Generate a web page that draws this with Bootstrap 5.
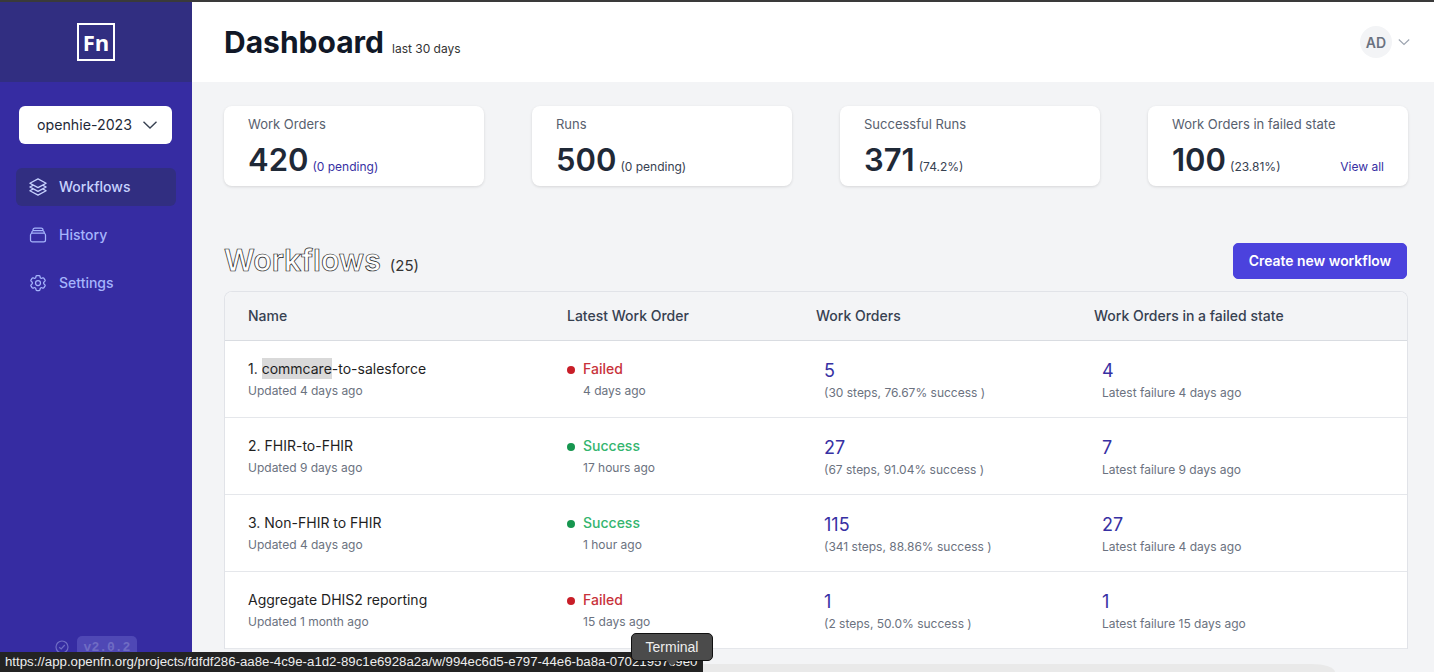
<!DOCTYPE html>
<html lang="en">
<head>
  <meta charset="UTF-8">
  <meta name="viewport" content="width=device-width, initial-scale=1">
  <title>Dashboard</title>
  <link href="https://cdn.jsdelivr.net/npm/bootstrap@5.3.0/dist/css/bootstrap.min.css" rel="stylesheet">
  <style>
    html, body {
      height: 672px;
      overflow: hidden;
    }
    body {
      background-color: #f3f4f6;
      font-family: Inter, "Liberation Sans", sans-serif;
      color: #1f2937;
      border-top: 2px solid #3a3a3a;
    }
    .app-shell { height: 670px; }
    .side-bar {
      width: 192px;
      flex: 0 0 192px;
      background-color: #362ca2;
    }
    .side-logo {
      height: 80px;
      background-color: #312e81;
    }
    .logo-box {
      width: 38px;
      height: 38px;
      border: 2px solid #fff;
      color: #fff;
      font-size: 22px;
      font-weight: 700;
      font-family: "Open Sans", sans-serif;
      line-height: 34px;
      text-align: center;
    }
    .project-pick {
      margin: 24px 20px 24px 19px;
      height: 38px;
      font-size: 14.2px;
      color: #1f2937;
      padding: 0 14px 0 18px;
      border-radius: 6px;
    }
    .side-link {
      height: 38px;
      margin: 0 16px 10px;
      padding: 0 12px 1px;
      gap: 11px;
      border-radius: 6px;
      font-size: 14px;
      font-weight: 500;
      color: #a5b4fc;
      text-decoration: none;
    }
    .side-link.is-on {
      background-color: #312e81;
      color: #c7d2fe;
    }
    .side-link svg { width: 20px; height: 20px; flex: none; }
    .side-ver {
      margin-top: auto;
      padding-bottom: 13px;
      gap: 8px;
      color: #6f6cc4;
    }
    .ver-tag {
      background-color: #4f48b5;
      border-radius: 5px;
      font-family: "Liberation Mono", monospace;
      font-size: 13px;
      font-weight: 700;
      padding: 2px 7px;
      color: #6f6cc4;
    }
    .top-bar {
      height: 80px;
      background-color: #fff;
      padding: 0 24px 0 32px;
    }
    .page-title {
      font-size: 30px;
      font-weight: 700;
      color: #111827;
      margin: 0;
      line-height: 36px;
    }
    .page-note {
      font-size: 12px;
      color: #333;
      margin-left: 8px;
    }
    .avatar-dot {
      width: 32px;
      height: 32px;
      margin-right: -2px;
      background-color: #f3f4f6;
      color: #6b7280;
      font-size: 14px;
      font-weight: 600;
    }
    .page-body { padding: 24px 26px 0 32px; }
    .stat-grid {
      display: grid;
      grid-template-columns: repeat(4, 260px);
      gap: 48px;
    }
    .stat-card {
      height: 80px;
      border: 0;
      border-radius: 8px;
      box-shadow: 0 1px 3px rgba(0, 0, 0, .12);
      padding: 9px 24px 0;
    }
    .stat-label {
      font-size: 13px;
      line-height: 18px;
      color: #57606e;
      margin-bottom: 7px;
    }
    .stat-num {
      font-size: 31px;
      font-weight: 600;
      line-height: 40px;
      color: #1f2937;
      margin-right: 4px;
    }
    .stat-extra { font-size: 12px; color: #374151; }
    .link-indigo { color: #3730a3; text-decoration: none; }
    .list-head { margin-top: 57px; height: 36px; }
    .list-label { margin-bottom: 2px; }
    .list-title {
      font-size: 30.2px;
      font-weight: 600;
      line-height: 36px;
      color: #fff;
      -webkit-text-stroke: .7px #222;
      margin: 0;
    }
    .list-count { font-size: 15px; color: #333; margin-left: 9px; }
    .btn-create {
      width: 174px;
      height: 36px;
      margin-right: 1px;
      background-color: #4b42dd;
      border-color: #4b42dd;
      color: #fff;
      font-size: 13.9px;
      font-weight: 600;
      padding: 0;
      border-radius: 5px;
    }
    .flow-wrap {
      margin-top: 12px;
      border: 1px solid #e1e3e8;
      border-bottom: 0;
      border-radius: 8px 8px 0 0;
      overflow: hidden;
      background-color: #fff;
    }
    .flow-table { margin: 0; table-layout: fixed; }
    .flow-table th {
      height: 48px;
      background-color: #f3f4f6;
      font-size: 14px;
      font-weight: 500;
      color: #374151;
      vertical-align: middle;
      padding: 0;
      border-bottom: 1px solid #d9dce1;
    }
    .flow-table td {
      height: 77px;
      padding: 2px 0 0;
      vertical-align: middle;
      border-bottom: 1px solid #e5e7eb;
    }
    .flow-table .cell-a { width: 342px; padding-left: 23px; }
    .flow-table .cell-b { width: 249px; }
    .flow-table .cell-c { width: 278px; }
    .flow-table .num-in { padding: 4px 0 0 8px; }
    .flow-name { font-size: 14px; line-height: 20px; margin-bottom: 3px; color: #1f1f1f; }
    .name-pick { background-color: #d9d9d9; padding: 2px 0; }
    .flow-sub { font-size: 12px; line-height: 18px; color: #6b7280; }
    .state-text { font-size: 14px; line-height: 20px; margin-bottom: 3px; font-weight: 500; }
    .state-dot {
      width: 8px;
      height: 8px;
      margin-right: 8px;
      border-radius: 50%;
      display: inline-block;
    }
    .is-fail { color: #c8323a; }
    .is-fail .state-dot { background-color: #c81e28; }
    .is-ok { color: #34b56f; }
    .is-ok .state-dot { background-color: #16964f; }
    .sub-in { padding-left: 16px; }
    .num-link { font-size: 18px; line-height: 24px; margin-bottom: 1px; color: #3730a3; text-decoration: none; display: block; }
    .status-url {
      position: absolute;
      left: 0;
      bottom: 0;
      width: 703px;
      height: 20px;
      background-color: #232323;
      color: #ededed;
      font-family: "Liberation Sans", sans-serif;
      font-size: 13.25px;
      line-height: 20px;
      padding-left: 5px;
      white-space: nowrap;
      overflow: hidden;
    }
    .term-tip {
      position: absolute;
      left: 631px;
      top: 633px;
      width: 82px;
      height: 28px;
      background-color: #4b4b4b;
      border: 1px solid #111;
      border-radius: 5px;
      color: #eee;
      font-family: "Liberation Sans", sans-serif;
      font-size: 14px;
      line-height: 26px;
      text-align: center;
    }
    .term-tip::after {
      content: "";
      position: absolute;
      left: 34px;
      top: 26px;
      border: 6px solid transparent;
      border-top-color: #4b4b4b;
    }
    .ghost-shape {
      position: absolute;
      left: 703px;
      top: 655px;
      width: 650px;
      height: 17px;
      background-color: #f3f4f6;
      border-top-right-radius: 60px 24px;
    }
    .ghost-shape::after {
      content: "";
      position: absolute;
      left: 0;
      top: 9px;
      width: 632px;
      height: 8px;
      background-color: #e9e9e9;
      border-top-right-radius: 30px 10px;
    }
  </style>
</head>
<body>
  <div class="app-shell d-flex">
    <aside class="side-bar d-flex flex-column">
      <div class="side-logo d-flex align-items-center justify-content-center">
        <div class="logo-box">Fn</div>
      </div>
      <button class="project-pick btn btn-light bg-white border-0 d-flex align-items-center justify-content-between" type="button">
        openhie-2023
        <svg width="16" height="16" viewBox="0 0 16 16" fill="none" stroke="#374151" stroke-width="1.4"><path d="M1.5 4.8 8 11l6.5-6.2"/></svg>
      </button>
      <a class="side-link is-on d-flex align-items-center" href="#">
        <svg viewBox="0 0 24 24" fill="none" stroke="currentColor" stroke-width="1.5" stroke-linecap="round" stroke-linejoin="round"><path d="M6.429 9.75L2.25 12l4.179 2.25m0-4.5l5.571 3 5.571-3m-11.142 0L2.25 7.5 12 2.25l9.75 5.25-4.179 2.25m0 0L21.75 12l-4.179 2.25m0 0l4.179 2.25L12 21.75 2.25 16.5l4.179-2.25m11.142 0l-5.571 3-5.571-3"/></svg>
        Workflows
      </a>
      <a class="side-link d-flex align-items-center" href="#">
        <svg viewBox="0 0 24 24" fill="none" stroke="currentColor" stroke-width="1.5" stroke-linecap="round" stroke-linejoin="round"><path d="M6 6.878V6a2.25 2.25 0 012.25-2.25h7.5A2.25 2.25 0 0118 6v.878m-12 0c.235-.083.487-.128.75-.128h10.5c.263 0 .515.045.75.128m-12 0A2.25 2.25 0 004.5 9v.878m13.5-3A2.25 2.25 0 0119.5 9v.878m0 0a2.246 2.246 0 00-.75-.128H5.25c-.263 0-.515.045-.75.128m15 0A2.25 2.25 0 0121 12v6a2.25 2.25 0 01-2.25 2.25H5.25A2.25 2.25 0 013 18v-6c0-.98.626-1.813 1.5-2.122"/></svg>
        History
      </a>
      <a class="side-link d-flex align-items-center" href="#">
        <svg viewBox="0 0 24 24" fill="none" stroke="currentColor" stroke-width="1.5" stroke-linecap="round" stroke-linejoin="round"><path d="M9.594 3.94c.09-.542.56-.94 1.11-.94h2.593c.55 0 1.02.398 1.11.94l.213 1.281c.063.374.313.686.645.87.074.04.147.083.22.127.324.196.72.257 1.075.124l1.217-.456a1.125 1.125 0 011.37.49l1.296 2.247a1.125 1.125 0 01-.26 1.431l-1.003.827c-.293.24-.438.613-.431.992a6.759 6.759 0 010 .255c-.007.378.138.75.43.99l1.005.828c.424.35.534.954.26 1.43l-1.298 2.247a1.125 1.125 0 01-1.369.491l-1.217-.456c-.355-.133-.75-.072-1.076.124a6.57 6.57 0 01-.22.128c-.331.183-.581.495-.644.869l-.213 1.28c-.09.543-.56.941-1.11.941h-2.594c-.55 0-1.02-.398-1.11-.94l-.213-1.281c-.062-.374-.312-.686-.644-.87a6.52 6.52 0 01-.22-.127c-.325-.196-.72-.257-1.076-.124l-1.217.456a1.125 1.125 0 01-1.369-.49l-1.297-2.247a1.125 1.125 0 01.26-1.431l1.004-.827c.292-.24.437-.613.43-.992a6.932 6.932 0 010-.255c.007-.378-.138-.75-.43-.99l-1.004-.828a1.125 1.125 0 01-.26-1.43l1.297-2.247a1.125 1.125 0 011.37-.491l1.216.456c.356.133.751.072 1.076-.124.072-.044.146-.087.22-.128.332-.183.582-.495.644-.869l.214-1.281z"/><path d="M15 12a3 3 0 11-6 0 3 3 0 016 0z"/></svg>
        Settings
      </a>
      <div class="side-ver d-flex align-items-center justify-content-center">
        <svg width="14" height="14" viewBox="0 0 14 14" fill="none" stroke="currentColor" stroke-width="1.2"><circle cx="7" cy="7" r="6"/><path d="M4.2 7.2 6.2 9l3.6-4"/></svg>
        <span class="ver-tag">v2.0.2</span>
      </div>
    </aside>

    <div class="flex-grow-1 overflow-hidden">
      <header class="top-bar d-flex align-items-center justify-content-between">
        <div class="d-flex align-items-baseline">
          <h1 class="page-title">Dashboard</h1>
          <span class="page-note">last 30 days</span>
        </div>
        <div class="d-flex align-items-center gap-2">
          <div class="avatar-dot rounded-circle d-flex align-items-center justify-content-center">AD</div>
          <svg width="12" height="12" viewBox="0 0 12 12" fill="none" stroke="#9ca3af" stroke-width="1.1"><path d="M.8 3.5 6 8.5l5.2-5"/></svg>
        </div>
      </header>

      <main class="page-body">
        <div class="stat-grid">
          <div class="card stat-card">
            <div class="stat-label">Work Orders</div>
            <div class="d-flex align-items-baseline"><span class="stat-num">420</span><a class="stat-extra link-indigo" href="#">(0 pending)</a></div>
          </div>
          <div class="card stat-card">
            <div class="stat-label">Runs</div>
            <div class="d-flex align-items-baseline"><span class="stat-num">500</span><span class="stat-extra">(0 pending)</span></div>
          </div>
          <div class="card stat-card">
            <div class="stat-label">Successful Runs</div>
            <div class="d-flex align-items-baseline"><span class="stat-num">371</span><span class="stat-extra">(74.2%)</span></div>
          </div>
          <div class="card stat-card">
            <div class="stat-label">Work Orders in failed state</div>
            <div class="d-flex align-items-baseline"><span class="stat-num">100</span><span class="stat-extra">(23.81%)</span><a class="stat-extra link-indigo ms-auto" href="#">View all</a></div>
          </div>
        </div>

        <div class="list-head d-flex align-items-center justify-content-between">
          <div class="list-label d-flex align-items-baseline">
            <h2 class="list-title">Workflows</h2>
            <span class="list-count">(25)</span>
          </div>
          <button class="btn btn-create" type="button">Create new workflow</button>
        </div>

        <div class="flow-wrap">
          <table class="table flow-table">
            <thead>
              <tr>
                <th class="cell-a">Name</th>
                <th class="cell-b">Latest Work Order</th>
                <th class="cell-c">Work Orders</th>
                <th>Work Orders in a failed state</th>
              </tr>
            </thead>
            <tbody>
              <tr>
                <td class="cell-a"><div class="flow-name">1. <span class="name-pick">commcare</span>-to-salesforce</div><div class="flow-sub">Updated 4 days ago</div></td>
                <td><div class="state-text is-fail"><span class="state-dot"></span>Failed</div><div class="flow-sub sub-in">4 days ago</div></td>
                <td class="num-in"><a class="num-link" href="#">5</a><div class="flow-sub">(30 steps, 76.67% success )</div></td>
                <td class="num-in"><a class="num-link" href="#">4</a><div class="flow-sub">Latest failure 4 days ago</div></td>
              </tr>
              <tr>
                <td class="cell-a"><div class="flow-name">2. FHIR-to-FHIR</div><div class="flow-sub">Updated 9 days ago</div></td>
                <td><div class="state-text is-ok"><span class="state-dot"></span>Success</div><div class="flow-sub sub-in">17 hours ago</div></td>
                <td class="num-in"><a class="num-link" href="#">27</a><div class="flow-sub">(67 steps, 91.04% success )</div></td>
                <td class="num-in"><a class="num-link" href="#">7</a><div class="flow-sub">Latest failure 9 days ago</div></td>
              </tr>
              <tr>
                <td class="cell-a"><div class="flow-name">3. Non-FHIR to FHIR</div><div class="flow-sub">Updated 4 days ago</div></td>
                <td><div class="state-text is-ok"><span class="state-dot"></span>Success</div><div class="flow-sub sub-in">1 hour ago</div></td>
                <td class="num-in"><a class="num-link" href="#">115</a><div class="flow-sub">(341 steps, 88.86% success )</div></td>
                <td class="num-in"><a class="num-link" href="#">27</a><div class="flow-sub">Latest failure 4 days ago</div></td>
              </tr>
              <tr>
                <td class="cell-a"><div class="flow-name">Aggregate DHIS2 reporting</div><div class="flow-sub">Updated 1 month ago</div></td>
                <td><div class="state-text is-fail"><span class="state-dot"></span>Failed</div><div class="flow-sub sub-in">15 days ago</div></td>
                <td class="num-in"><a class="num-link" href="#">1</a><div class="flow-sub">(2 steps, 50.0% success )</div></td>
                <td class="num-in"><a class="num-link" href="#">1</a><div class="flow-sub">Latest failure 15 days ago</div></td>
              </tr>
            </tbody>
          </table>
        </div>
      </main>
    </div>
  </div>

  <div class="ghost-shape"></div>
  <div class="status-url">https://app.openfn.org/projects/fdfdf286-aa8e-4c9e-a1d2-89c1e6928a2a/w/994ec6d5-e797-44e6-ba8a-07021957c9e0</div>
  <div class="term-tip">Terminal</div>

  <script src="https://cdn.jsdelivr.net/npm/bootstrap@5.3.0/dist/js/bootstrap.bundle.min.js"></script>
</body>
</html>
